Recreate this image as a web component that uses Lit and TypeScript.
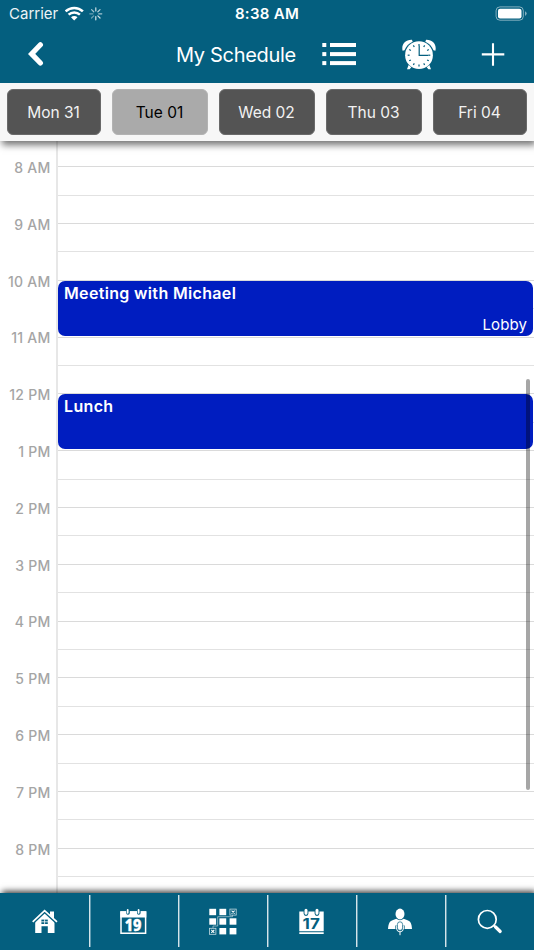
import { LitElement, html, css, svg, nothing } from "lit";
import { customElement, property } from "lit/decorators.js";

interface CalendarEvent {
  title: string;
  place?: string;
}

const DAYS = ["Mon 31", "Tue 01", "Wed 02", "Thu 03", "Fri 04"];
const SELECTED_DAY = 1;

const HOURS = [
  "8 AM", "9 AM", "10 AM", "11 AM", "12 PM", "1 PM", "2 PM",
  "3 PM", "4 PM", "5 PM", "6 PM", "7 PM", "8 PM",
];

const EVENTS: Record<string, CalendarEvent> = {
  "10 AM": { title: "Meeting with Michael", place: "Lobby" },
  "12 PM": { title: "Lunch" },
};

const TEAL = "#045f7f";

@customElement("status-bar")
class StatusBar extends LitElement {
  static styles = css`
    :host {
      display: grid;
      grid-template-columns: 1fr auto 1fr;
      align-items: center;
      height: 27px;
      padding: 0 7px 0 9px;
      color: #fff;
      font-size: 15px;
      line-height: 27px;
    }
    .left { display: flex; align-items: center; }
    .carrier { width: 56px; letter-spacing: 0; opacity: 0.93; }
    .clock { font-weight: 600; letter-spacing: 0.28px; margin-left: -2px; }
    .battery { justify-self: end; }
    svg { display: block; }
  `;
  render() {
    return html`
      <div class="left">
        <span class="carrier">Carrier</span>
        <svg width="40" height="16" viewBox="65 5.5 40 16" fill="none">
          <path d="M65.6 10.9 A12.6 12.6 0 0 1 82.9 10.9" stroke="#fff" stroke-width="2.6" />
          <path d="M68.6 14.1 A8.3 8.3 0 0 1 79.9 14.1" stroke="#fff" stroke-width="2.5" />
          <path d="M74.2 19.9 L71 16.8 A4.6 4.6 0 0 1 77.5 16.8 Z" fill="#fff" />
          ${[0.95, 0.85, 0.75, 0.95, 1, 0.5, 0.5, 0.75].map(
            (o, i) => svg`<path d="M95.8 10.4 V7.3" stroke="#fff" stroke-width="1.2" stroke-linecap="round"
              opacity=${o * 0.85} transform="rotate(${i * 45} 95.8 13.3)" />`
          )}
        </svg>
      </div>
      <span class="clock">8:38 AM</span>
      <svg class="battery" width="32" height="16" viewBox="495 5.5 32 16">
        <rect x="496.1" y="6.4" width="27.2" height="13.3" rx="3.8" fill="none" stroke="#fff" stroke-width="1" opacity=".5" />
        <rect x="498" y="8.2" width="23.5" height="9.8" rx="2.1" fill="#fff" />
        <path d="M525 10.8 Q526.7 11.8 526.7 13.1 Q526.7 14.4 525 15.4 Z" fill="#fff" opacity=".5" />
      </svg>
    `;
  }
}

@customElement("nav-header")
class NavHeader extends LitElement {
  static styles = css`
    :host {
      display: grid;
      grid-template-columns: 148px 146px 80px 79px 1fr;
      grid-template-rows: 56px;
      align-items: center;
      height: 56px;
      padding-left: 28px;
      box-sizing: border-box;
      color: #fff;
    }
    .title { font-size: 20px; line-height: 24px; letter-spacing: -0.32px; }
    svg { display: block; }
  `;
  render() {
    const ticks = [0, 30, 60, 90, 120, 150, 180, 210, 240, 270, 300, 330];
    return html`
      <svg width="16" height="26" viewBox="28 42 16 26">
        <path d="M40.4 44.8 L31.6 53.9 L40.4 63" fill="none" stroke="#fff" stroke-width="5.2" stroke-linecap="round" />
      </svg>
      <span class="title">My Schedule</span>
      <svg width="34" height="24" viewBox="322 43 34 24" fill="#fff">
        ${[43, 52.1, 61.1].map(
          (y) => svg`<rect x="322.3" y=${y} width="4" height="4" /><rect x="330" y=${y} width="26" height="4" />`
        )}
      </svg>
      <svg width="34" height="32" viewBox="402 39 34 32">
        <g fill="#fff">
          <path d="M402.6 50.8 C401.2 45 404.8 39.6 411.9 39.8 L412.7 41.8 C408.8 43.5 406.2 46.2 404.5 50.2 Z" />
          <path d="M435.4 50.8 C436.8 45 433.2 39.6 426.1 39.8 L425.3 41.8 C429.2 43.5 431.8 46.2 433.5 50.2 Z" />
          <path d="M408.6 65 L411.3 67.2 L409.6 69.3 L407 69.3 Z M429.4 65 L426.7 67.2 L428.4 69.3 L431 69.3 Z" />
          <circle cx="419" cy="55.2" r="13.9" />
        </g>
        <g fill="none" stroke=${TEAL} stroke-width="1.2">
          ${ticks.map((a) => svg`<path d="M419 43.9 V45.8" transform="rotate(${a} 419 55.2)" />`)}
          <path d="M419.2 45.6 V55.4 H428.4" />
        </g>
      </svg>
      <svg width="24" height="24" viewBox="481 43 24 24">
        <path d="M493 43.3 V65.8 M481.8 54.4 H504.3" stroke="#fff" stroke-width="2.1" />
      </svg>
    `;
  }
}

@customElement("day-picker")
class DayPicker extends LitElement {
  static styles = css`
    :host {
      display: grid;
      grid-template-columns: 94px 96px 96px 96px 94px;
      gap: 11px;
      height: 58px;
      box-sizing: border-box;
      padding: 6px 7px;
      background: #f7f7f7;
      box-shadow: 2px 4px 7px rgba(0, 0, 0, 0.55);
      position: relative;
      z-index: 2;
    }
    .day {
      height: 46px;
      border: 1px solid #6a6a6a;
      border-radius: 6px;
      box-sizing: border-box;
      background: #545454;
      color: #f2f2f2;
      text-align: center;
      font-size: 15.5px;
      line-height: 45px;
      letter-spacing: 0;
      padding-right: 1px;
    }
    .selected { background: #aaa; border-color: #b3b3b3; color: #000; }
  `;
  render() {
    return html`${DAYS.map(
      (d, i) => html`<div class="day ${i === SELECTED_DAY ? "selected" : ""}">${d}</div>`
    )}`;
  }
}

@customElement("hour-row")
class HourRow extends LitElement {
  @property() label = "";
  @property({ attribute: false }) event?: CalendarEvent;
  static styles = css`
    :host { display: grid; grid-template-columns: 56px 1fr; height: 56.8px; flex: none; }
    .label {
      margin-top: -8.3px;
      padding-right: 5.5px;
      text-align: right;
      font-size: 14px;
      font-weight: 500;
      line-height: 20px;
      letter-spacing: 0.26px;
      color: #a5a5a5;
    }
    .slot {
      position: relative;
      display: grid;
      grid-template-rows: 1fr 1fr;
      border-left: 2px solid #e7e7e7;
    }
    .half { border-top: 1.4px solid #dadada; }
    .half + .half { border-color: #e2e2e2; }
    .event {
      position: absolute;
      inset: 1px 1px 0.8px 0;
      display: flex;
      flex-direction: column;
      justify-content: space-between;
      padding: 2px 6px 1px;
      border-radius: 7px;
      background: #001dc0;
      color: #fff;
    }
    .title { font-size: 16px; font-weight: 600; line-height: 21px; letter-spacing: 0.34px; }
    .place { font-size: 15px; line-height: 21px; letter-spacing: 0.1px; text-align: right; }
  `;
  render() {
    const e = this.event;
    return html`
      <div class="label">${this.label}</div>
      <div class="slot">
        <div class="half"></div>
        <div class="half"></div>
        ${e
          ? html`<div class="event">
              <div class="title">${e.title}</div>
              ${e.place ? html`<div class="place">${e.place}</div>` : nothing}
            </div>`
          : nothing}
      </div>
    `;
  }
}

@customElement("tab-bar")
class TabBar extends LitElement {
  static styles = css`
    :host {
      display: grid;
      grid-template-columns: repeat(6, 1fr);
      height: 57px;
      box-sizing: border-box;
      padding: 2px 0 3px;
      background: #045f7f;
      box-shadow: 2px -2px 6px rgba(0, 0, 0, 0.75);
      position: relative;
      z-index: 2;
    }
    .tab { display: flex; justify-content: center; align-items: center; }
    .tab + .tab { background: linear-gradient(90deg, #d5e4e9 0 1px, #5f9ab0 1px 2px, transparent 2px); }
    svg { display: block; }
    text { font-family: "Noto Sans", sans-serif; font-weight: 800; text-anchor: middle; }
    .plain { font-family: Inter, sans-serif; font-weight: 700; }
  `;
  render() {
    const cells: [number, number][] = [
      [209.3, 908.8], [219.4, 908.8], [209.3, 918.3], [219.4, 918.3],
      [229.6, 918.3], [219.4, 928], [229.6, 928],
    ];
    const marks: [number, number][] = [[229.7, 908.9], [209.4, 928.1]];
    return html`
      <div class="tab">
        <svg width="89" height="52" viewBox="0 895 89 52">
          <g fill="#fff">
            <path d="M50 911.6 H54 V920 L50 916.2 Z" />
            <path d="M35.2 921.2 L44.6 912 L54.5 921.2 V933 H47.8 V926.2 H41.5 V933 H35.2 Z" />
          </g>
          <path d="M33 922.9 L44.6 911.7 L56.7 922.9" fill="none" stroke=${TEAL} stroke-width="2.6" />
          <path d="M32.7 921.9 L44.6 910.7 L57 921.9" fill="none" stroke="#fff" stroke-width="1.7" />
          <path d="M41.4 919.6 H47.8 V924 H41.4 Z" fill=${TEAL} />
          <path d="M44.6 919.3 V924.1 M41.2 921.8 H48" stroke="#fff" stroke-width=".8" />
        </svg>
      </div>
      <div class="tab">
        <svg width="89" height="52" viewBox="89 895 89 52">
          <path d="M121 912 H145.6 V933.2 H121 Z" fill="none" stroke="#fff" stroke-width="1.5" />
          <rect x="120.3" y="911.3" width="26" height="6.2" fill="#fff" />
          <g stroke-linecap="round" fill="none">
            <path d="M128 910.5 V913 M138.8 910.5 V913" stroke=${TEAL} stroke-width="3.6" />
            <path d="M127.7 909.9 V912.8 M138.6 909.9 V912.8" stroke="#fff" stroke-width="1.8" />
          </g>
          <text x="133.1" y="930.7" font-size="15.6" fill="#fff" stroke="#fff" stroke-width=".4" textLength="16.8" lengthAdjust="spacingAndGlyphs">19</text>
        </svg>
      </div>
      <div class="tab">
        <svg width="89" height="52" viewBox="178 895 89 52">
          <path d="M213 928 V926 H217.7 V916.7 H232.5 V915" fill="none" stroke="#9fc0cc" stroke-width=".8" />
          ${cells.map(([x, y]) => svg`<rect x=${x} y=${y} width="6.8" height="6.4" fill="#fff" />`)}
          ${marks.map(
            ([x, y]) => svg`<g transform="translate(${x} ${y})" fill="none" stroke="#c5dae1" stroke-width=".8">
              <rect x=".2" y=".2" width="6.3" height="6" />
              <path d="M1.9 1.8 L4.9 4.7 M4.9 1.8 L1.9 4.7" stroke="#fff" stroke-width="1.1" />
            </g>`
          )}
        </svg>
      </div>
      <div class="tab">
        <svg width="89" height="52" viewBox="267 895 89 52">
          <path d="M299.3 911.4 H323.7 V931.2 H299.3 Z M299.3 932.2 H323.7 V934 H299.3 Z" fill="#fff" />
          <g stroke-linecap="round">
            <path d="M306 910.6 V913.6 M317 910.6 V913.6" stroke=${TEAL} stroke-width="4.8" />
            <path d="M306 910.3 V913.3 M317 910.3 V913.3" stroke="#fff" stroke-width="3" />
          </g>
          <text class="plain" x="311.2" y="929.4" font-size="14.4" fill=${TEAL} textLength="17.2" lengthAdjust="spacingAndGlyphs">17</text>
        </svg>
      </div>
      <div class="tab">
        <svg width="89" height="52" viewBox="356 895 89 52">
          <g fill="#fff">
            <ellipse cx="400" cy="914" rx="4.5" ry="5.4" />
            <path d="M388 929 C388.4 923.5 389.5 921.4 392.5 920.2 L396.3 918.8 Q400 921.6 403.7 918.8 L407.5 920.2 C410.5 921.4 411.8 923.5 412 929 Z" />
          </g>
          <path d="M396.4 925.5 V928 Q396.8 931.9 400 931.9 Q403.2 931.9 403.6 928 V925.5" fill="none" stroke=${TEAL} stroke-width="2.2" />
          <path d="M396.4 925.5 V928 Q396.8 931.9 400 931.9 Q403.2 931.9 403.6 928 V925.5 M400 932 V935.2" fill="none" stroke="#fff" stroke-width="1" />
          <rect x="397.4" y="921.8" width="5.2" height="8.6" rx="2.6" fill="#fff" stroke=${TEAL} stroke-width=".7" />
        </svg>
      </div>
      <div class="tab">
        <svg width="89" height="52" viewBox="445 895 89 52" fill="none" stroke="#fff">
          <circle cx="487.3" cy="919.4" r="8.9" stroke-width="1.7" />
          <path d="M493.7 925.4 L496 927.5" stroke-width="1.9" />
          <path d="M495.6 927 L500.2 931.5" stroke-width="3.2" stroke-linecap="round" />
        </svg>
      </div>
    `;
  }
}

@customElement("app-root")
class AppRoot extends LitElement {
  static styles = css`
    :host {
      display: flex;
      flex-direction: column;
      width: 534px;
      height: 950px;
      overflow: hidden;
      background: #fff;
      font-family: Inter, "Liberation Sans", sans-serif;
    }
    .top { background: #045f7f; height: 83px; flex: none; position: relative; z-index: 3; }
    .calendar {
      position: relative;
      flex: 1;
      min-height: 0;
      overflow: hidden;
      display: flex;
      flex-direction: column;
    }
    .lead { flex: none; height: 25.3px; margin-left: 56px; border-left: 2px solid #e7e7e7; }
    .scrollbar {
      position: absolute;
      top: 237.5px;
      right: 4px;
      width: 4px;
      height: 411.5px;
      border-radius: 2px;
      background: rgba(0, 0, 0, 0.35);
    }
  `;
  render() {
    return html`
      <div class="top">
        <status-bar></status-bar>
        <nav-header></nav-header>
      </div>
      <day-picker></day-picker>
      <div class="calendar">
        <div class="lead"></div>
        ${HOURS.map((h) => html`<hour-row .label=${h} .event=${EVENTS[h]}></hour-row>`)}
        <div class="scrollbar"></div>
      </div>
      <tab-bar></tab-bar>
    `;
  }
}
